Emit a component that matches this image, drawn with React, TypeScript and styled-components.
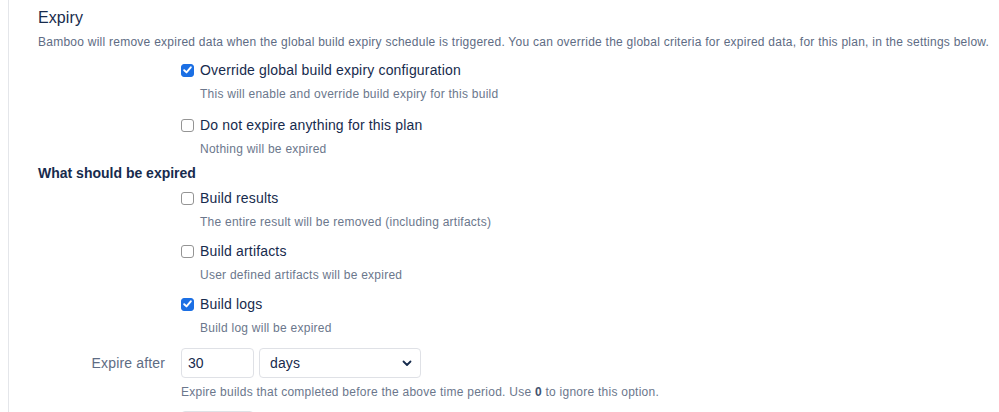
import React from "react";
import styled, { createGlobalStyle } from "styled-components";

const Global = createGlobalStyle`
  html, body { margin: 0; padding: 0; background: #fff; }
  body { font-family: "Liberation Sans", Arial, sans-serif; color: #172b4d; }
  * { box-sizing: border-box; }
`;

const Page = styled.div`
  padding-left: 8px;
  height: 412px;
  overflow: hidden;
`;

const Panel = styled.section`
  border-left: 1px solid #e4e6ea;
  padding: 8px 0 0 29px;
  height: 100%;
`;

const Title = styled.h2`
  margin: 0;
  font-size: 16px;
  line-height: 20px;
  font-weight: 500;
  letter-spacing: 0.1px;
  color: #172b4d;
`;

const Description = styled.p`
  margin: 6px 0 0;
  font-size: 12px;
  line-height: 16px;
  letter-spacing: 0.25px;
  color: #5e6c84;
  white-space: nowrap;
`;

const FieldRow = styled.div<{ $top?: number }>`
  display: grid;
  grid-template-columns: 127px 1fr;
  column-gap: 16px;
  align-items: start;
  margin-top: ${(p) => p.$top ?? 0}px;
`;

const SideLabel = styled.label`
  font-size: 14px;
  line-height: 30px;
  letter-spacing: 0.15px;
  color: #5e6c84;
  text-align: right;
`;

const Legend = styled.div<{ $top?: number }>`
  margin-top: ${(p) => p.$top ?? 0}px;
  font-size: 14px;
  line-height: 20px;
  font-weight: 700;
  color: #172b4d;
`;

const CheckList = styled.div<{ $gap: number }>`
  display: flex;
  flex-direction: column;
  gap: ${(p) => p.$gap}px;
`;

const CheckItem = styled.div`
  display: flex;
  flex-direction: column;
`;

const CheckLine = styled.label`
  display: flex;
  align-items: center;
  gap: 6px;
  font-size: 14px;
  line-height: 20px;
  letter-spacing: 0.17px;
  color: #172b4d;
`;

const Box = styled.span<{ $checked: boolean }>`
  width: 13px;
  height: 13px;
  border-radius: 3px;
  flex: none;
  display: inline-flex;
  align-items: center;
  justify-content: center;
  background: ${(p) => (p.$checked ? "#1b6fe4" : "#fff")};
  border: 1px solid ${(p) => (p.$checked ? "#1b6fe4" : "#949494")};
`;

const Help = styled.div<{ $indent?: number }>`
  margin-top: 6px;
  padding-left: ${(p) => p.$indent ?? 19}px;
  font-size: 12px;
  line-height: 16px;
  letter-spacing: 0.25px;
  color: #6b778c;
  white-space: nowrap;

  strong { color: #42526e; font-weight: 700; }
`;

const Controls = styled.div`
  display: flex;
  gap: 5px;
`;

const TextInput = styled.div<{ $width: number }>`
  width: ${(p) => p.$width}px;
  height: 30px;
  border: 1px solid #dfe1e6;
  border-radius: 4px;
  padding: 0 6px;
  font-size: 14px;
  line-height: 28px;
  color: #172b4d;
  background: #fff;
`;

const Select = styled.div`
  width: 162px;
  height: 30px;
  border: 1px solid #dfe1e6;
  border-radius: 4px;
  padding: 0 8px 0 10px;
  display: flex;
  align-items: center;
  justify-content: space-between;
  font-size: 14px;
  letter-spacing: 0.15px;
  color: #172b4d;
  background: #fff;
`;

const Check = () => (
  <svg width="9" height="8" viewBox="0 0 9 8">
    <path d="M1.2 4.2 L3.5 6.4 L7.8 1.3" fill="none" stroke="#fff" strokeWidth="1.9" strokeLinecap="round" strokeLinejoin="round" />
  </svg>
);

const Chevron = () => (
  <svg width="10" height="7" viewBox="0 0 10 7">
    <path d="M1.5 1.5 L5 5 L8.5 1.5" fill="none" stroke="#172b4d" strokeWidth="1.8" strokeLinecap="round" strokeLinejoin="round" />
  </svg>
);

type Opt = { label: string; help: string; checked: boolean };

const Option = ({ label, help, checked }: Opt) => (
  <CheckItem>
    <CheckLine>
      <Box $checked={checked}>{checked && <Check />}</Box>
      {label}
    </CheckLine>
    <Help>{help}</Help>
  </CheckItem>
);

const top: Opt[] = [
  { label: "Override global build expiry configuration", help: "This will enable and override build expiry for this build", checked: true },
  { label: "Do not expire anything for this plan", help: "Nothing will be expired", checked: false },
];

const what: Opt[] = [
  { label: "Build results", help: "The entire result will be removed (including artifacts)", checked: false },
  { label: "Build artifacts", help: "User defined artifacts will be expired", checked: false },
  { label: "Build logs", help: "Build log will be expired", checked: true },
];

export default function App() {
  return (
    <>
      <Global />
      <Page>
        <Panel>
          <Title>Expiry</Title>
          <Description>
            Bamboo will remove expired data when the global build expiry schedule is triggered. You can override the global criteria for expired data, for this plan, in the settings below.
          </Description>
          <FieldRow $top={10}>
            <span />
            <CheckList $gap={13}>
              {top.map((o) => (
                <Option key={o.label} {...o} />
              ))}
            </CheckList>
          </FieldRow>
          <Legend $top={6}>What should be expired</Legend>
          <FieldRow $top={5}>
            <span />
            <CheckList $gap={11}>
              {what.map((o) => (
                <Option key={o.label} {...o} />
              ))}
            </CheckList>
          </FieldRow>
          <FieldRow $top={12}>
            <SideLabel>Expire after</SideLabel>
            <div>
              <Controls>
                <TextInput $width={73}>30</TextInput>
                <Select>
                  days
                  <Chevron />
                </Select>
              </Controls>
              <Help $indent={0}>
                Expire builds that completed before the above time period. Use <strong>0</strong> to ignore this option.
              </Help>
            </div>
          </FieldRow>
          <FieldRow $top={11}>
            <span />
            <Controls>
              <TextInput $width={73} />
            </Controls>
          </FieldRow>
        </Panel>
      </Page>
    </>
  );
}
